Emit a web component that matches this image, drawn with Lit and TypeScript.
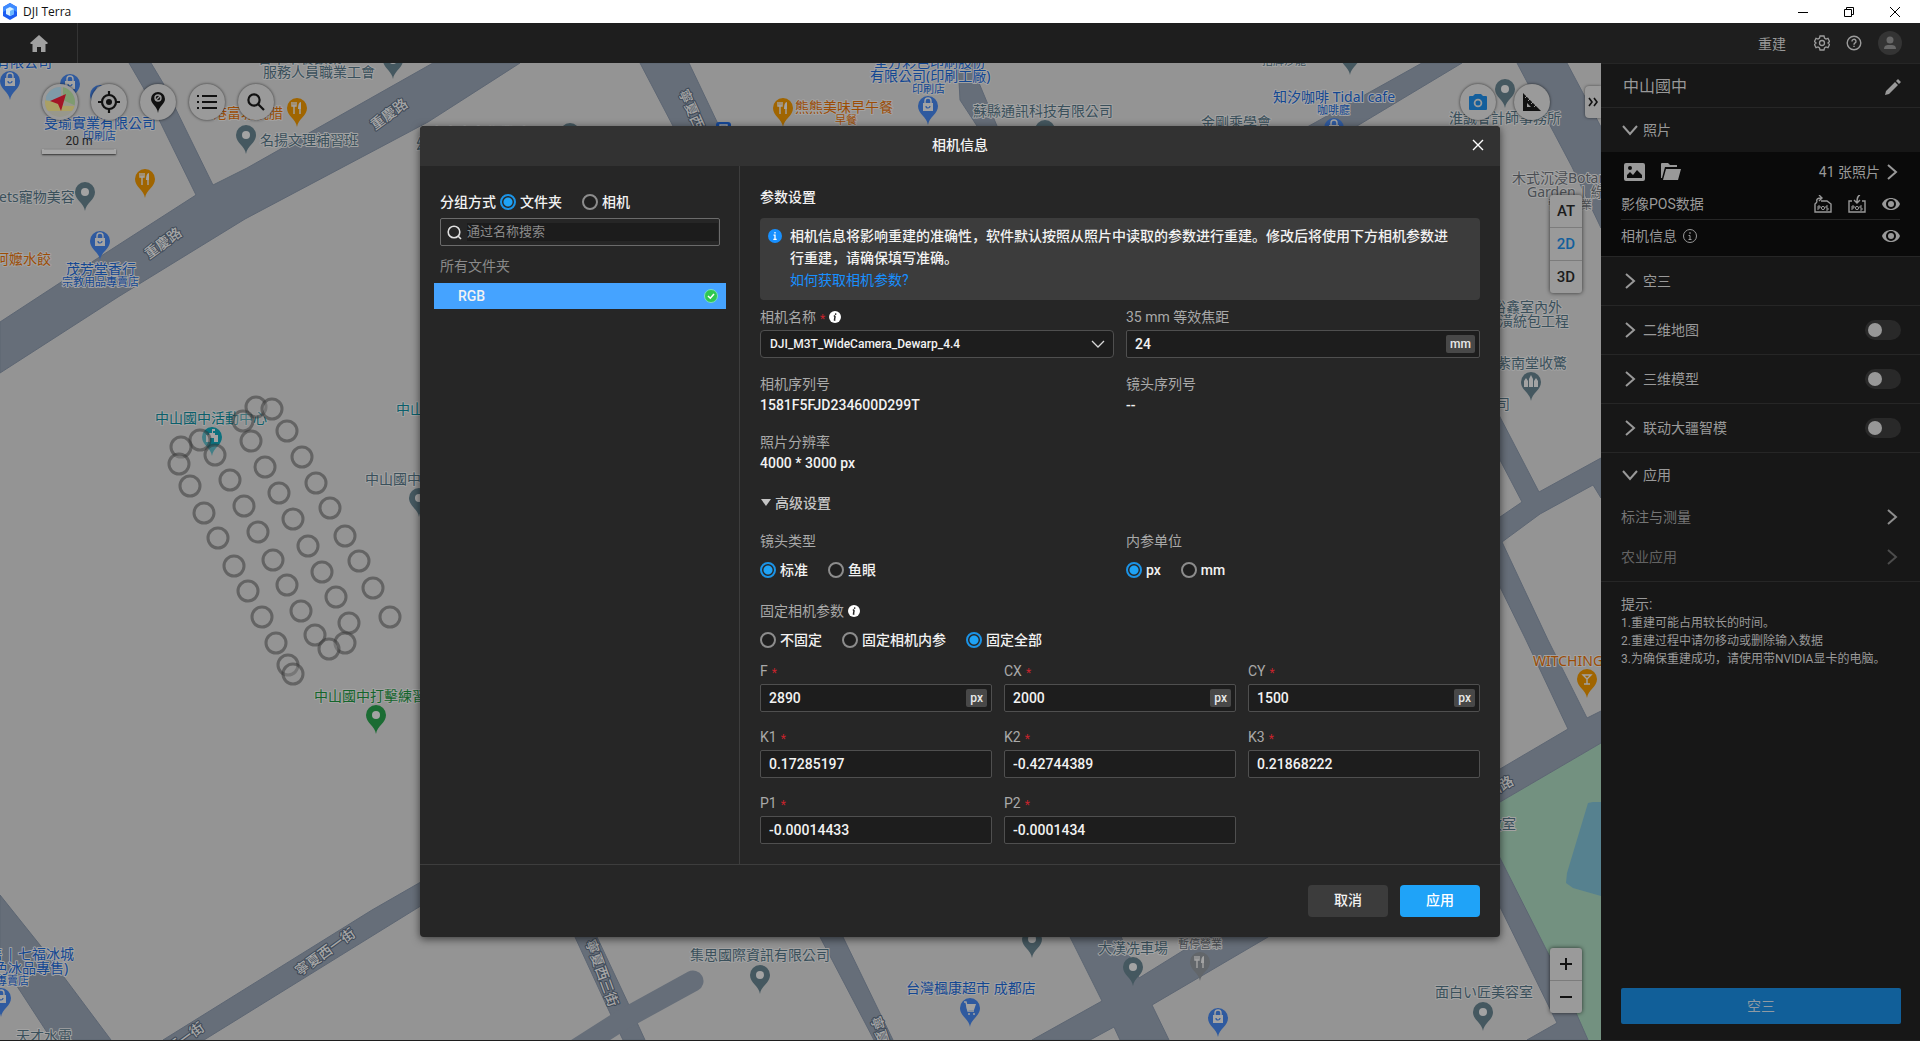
import { LitElement, html, svg, css, nothing } from "lit";
import { customElement, property, state } from "lit/decorators.js";
import { classMap } from "lit/directives/class-map.js";

const base = css`
  * {
    box-sizing: border-box;
  }
  button,
  input,
  select {
    font: inherit;
    color: inherit;
    margin: 0;
  }
  button {
    display: flex;
    align-items: center;
    justify-content: center;
    padding: 0;
    border: 0;
    background: none;
    cursor: pointer;
  }
  svg {
    display: block;
    flex: none;
  }
  h1,
  h2,
  p {
    margin: 0;
    font: inherit;
  }
`;

/* ---------- Map ---------- */

type Tone = "blue" | "slate" | "orange" | "green" | "teal" | "grey";
type Glyph = "dot" | "bag" | "food" | "cart" | "hall" | "drink" | "school";

interface Label {
  t: string;
  x: number;
  y: number;
  tone: Tone;
  small?: boolean;
}

const labels: Label[] = [
  { t: "有限公司", x: -4, y: 67, tone: "blue" },
  { t: "台中市餐飲業", x: 258, y: 63, tone: "slate" },
  { t: "服務人員職業工會", x: 263, y: 77, tone: "slate" },
  { t: "旻瑜實業有限公司", x: 44, y: 128, tone: "blue" },
  { t: "印刷店", x: 83, y: 140, tone: "blue", small: true },
  { t: "港富城燒腊", x: 213, y: 118, tone: "orange" },
  { t: "名揚文理補習班", x: 260, y: 145, tone: "slate" },
  { t: "ets寵物美容", x: -1, y: 202, tone: "slate" },
  { t: "阿嬤水餃", x: -5, y: 264, tone: "orange" },
  { t: "茂芳堂香行", x: 66, y: 274, tone: "blue" },
  { t: "宗教用品專賣店", x: 62, y: 286, tone: "blue", small: true },
  { t: "寶立文力作業點", x: 430, y: 138, tone: "slate" },
  { t: "幼", x: 416, y: 149, tone: "slate" },
  { t: "熊熊美味早午餐", x: 795, y: 112, tone: "orange" },
  { t: "早餐", x: 835, y: 124, tone: "orange", small: true },
  { t: "全方彩色印刷股份", x: 874, y: 67, tone: "blue" },
  { t: "有限公司(印刷工廠)", x: 870, y: 81, tone: "blue" },
  { t: "印刷店", x: 912, y: 93, tone: "blue", small: true },
  { t: "蘇縣通訊科技有限公司", x: 973, y: 116, tone: "slate" },
  { t: "金剛乘學會", x: 1201, y: 127, tone: "slate" },
  { t: "招牌沙龍", x: 1262, y: 65, tone: "slate", small: true },
  { t: "知汐咖啡 Tidal cafe", x: 1273, y: 102, tone: "blue" },
  { t: "咖啡廳", x: 1317, y: 114, tone: "blue", small: true },
  { t: "淮誠會計師事務所", x: 1449, y: 123, tone: "slate" },
  { t: "木式沉浸Botanic", x: 1512, y: 183, tone: "grey" },
  { t: "Garden | 綠沐", x: 1527, y: 197, tone: "grey" },
  { t: "暫停營業", x: 1548, y: 209, tone: "grey", small: true },
  { t: "裕鑫室內外", x: 1492, y: 312, tone: "slate" },
  { t: "潢統包工程", x: 1499, y: 326, tone: "slate" },
  { t: "紫南堂收驚", x: 1497, y: 368, tone: "slate" },
  { t: "司", x: 1496, y: 409, tone: "slate" },
  { t: "WITCHING", x: 1533, y: 666, tone: "orange" },
  { t: "教室", x: 1488, y: 829, tone: "slate" },
  { t: "中山國中活動中心", x: 155, y: 423, tone: "teal" },
  { t: "中山國中", x: 396, y: 414, tone: "teal" },
  { t: "中山國中", x: 365, y: 484, tone: "slate" },
  { t: "中山國中打擊練習場", x: 314, y: 701, tone: "green" },
  { t: "售 | 七福冰城", x: -11, y: 959, tone: "blue" },
  { t: "色冰品專售)", x: -6, y: 973, tone: "blue" },
  { t: "專賣店", x: -4, y: 985, tone: "blue", small: true },
  { t: "天才水電", x: 16, y: 1041, tone: "slate" },
  { t: "集思國際資訊有限公司", x: 690, y: 960, tone: "slate" },
  { t: "大漢冼車場", x: 1098, y: 953, tone: "slate" },
  { t: "暫停營業", x: 1178, y: 948, tone: "grey", small: true },
  { t: "台灣楓康超市 成都店", x: 906, y: 993, tone: "blue" },
  { t: "面白い匠美容室", x: 1435, y: 997, tone: "slate" },
];

const streets: [string, number, number, number][] = [
  ["重慶路", 389, 114, -36],
  ["重慶路", 163, 243, -36],
  ["寧夏西一街", 325, 952, -36],
  ["寧夏西一街", 174, 1046, -36],
  ["寧夏西三街", 602, 973, 70],
  ["寧夏西二街", 697, 122, 66],
  ["寧夏西二街", 886, 1050, 72],
  ["中山路", 1494, 790, -30],
];

const pins: [number, number, Tone, Glyph][] = [
  [10, 100, "blue", "bag"],
  [70, 103, "blue", "bag"],
  [100, 114, "blue", "bag"],
  [393, 79, "slate", "dot"],
  [297, 127, "orange", "food"],
  [246, 154, "slate", "dot"],
  [145, 198, "orange", "food"],
  [85, 211, "slate", "dot"],
  [100, 260, "blue", "bag"],
  [570, 152, "slate", "dot"],
  [783, 127, "orange", "food"],
  [928, 125, "blue", "bag"],
  [1045, 149, "slate", "dot"],
  [1350, 75, "slate", "dot"],
  [1334, 147, "blue", "bag"],
  [1505, 108, "slate", "dot"],
  [1531, 401, "slate", "hall"],
  [1587, 698, "orange", "drink"],
  [212, 456, "teal", "school"],
  [419, 517, "slate", "dot"],
  [376, 734, "green", "dot"],
  [1, 1017, "blue", "bag"],
  [760, 994, "slate", "dot"],
  [1032, 958, "slate", "dot"],
  [1133, 986, "slate", "dot"],
  [1200, 981, "grey", "food"],
  [970, 1027, "blue", "cart"],
  [1218, 1037, "blue", "bag"],
  [1483, 1031, "slate", "dot"],
];

const shots: [number, number][] = [
  [256, 407], [272, 409], [243, 421], [287, 431], [251, 441], [200, 440], [181, 447],
  [179, 464], [215, 455], [302, 457], [265, 467], [190, 486], [230, 480], [316, 483],
  [279, 493], [204, 513], [244, 506], [330, 508], [293, 519], [218, 538], [258, 532],
  [345, 536], [308, 546], [234, 566], [273, 560], [359, 561], [322, 572], [248, 591],
  [287, 585], [373, 588], [336, 597], [262, 617], [301, 611], [390, 617], [349, 623],
  [276, 643], [315, 635], [345, 643], [329, 649], [288, 665], [293, 674],
];

const roads = [
  "0,322 98,258 196,195 143,87 129,63 151,63 163,83 213,185 247,168 433,63 520,63 428,122 245,219 118,297 0,373",
  "640,63 689,63 719,126 726,140 680,140 673,126",
  "958,63 979,63 979,83 997,126 1003,140 983,140 977,126 960,100",
  "1422,63 1462,63 1357,126 1340,136 1290,136 1309,126",
  "1517,63 1567,63 1601,127 1601,228 1572,167",
  "1490,397 1500,417 1539,492 1601,458 1601,498 1593,485 1540,514 1502,542 1548,640 1587,718 1601,711 1601,743 1500,802 1490,808 1490,775 1500,769 1568,729 1526,640 1500,587 1490,566 1490,524 1500,517 1522,502 1500,460",
  "1490,838 1500,858 1550,957 1577,1015 1588,1040 1527,1040 1557,1023 1500,907 1490,887",
  "0,895 40,945 111,1040 52,1040 0,960",
  "440,871 372,910 163,1040 204,1040 440,894",
  "570,925 593,925 597,937 628,1003 645,1040 623,1040 610,1013 575,937",
  "816,925 839,925 843,937 893,1040 874,1040 820,937",
  "1066,925 1116,925 1139,978 1205,937 1225,925 1285,925 1268,937 1152,1005 1169,1040 1120,1040 1114,1027 1090,1040 1032,1040 1102,1001 1070,937",
];

const glyph = (g: Glyph) => {
  switch (g) {
    case "dot":
      return svg`<circle cy="-19" r="4" class="ink"/>`;
    case "bag":
      return svg`<path class="ink" d="M-5 -22H5V-14H-5Z"/><path class="inkline" d="M-3 -22V-24A3 3 0 0 1 3 -24V-22"/><path class="smile" d="M-2 -19A2 2 0 0 0 2 -19"/>`;
    case "food":
      return svg`<path class="inkline" d="M-3 -25V-13M-5 -25V-21H-1V-25M3 -19V-13"/><path class="ink" d="M4 -25V-18H1C1 -22 2 -25 4 -25Z"/>`;
    case "cart":
      return svg`<path class="ink" d="M-4 -23H6L4 -17H-3Z"/><path class="inkline" d="M-6 -25H-4L-2 -16H4"/><circle class="ink" cx="-1" cy="-13" r="1"/><circle class="ink" cx="4" cy="-13" r="1"/>`;
    case "hall":
      return svg`<path class="ink" d="M-7 -14V-20L-5 -23L-3 -20V-14ZM-2 -14V-22L0 -26L2 -22V-14ZM3 -14V-20L5 -23L7 -20V-14Z"/>`;
    case "drink":
      return svg`<path class="inkline" d="M-4 -23H4L0 -19ZM0 -19V-14M-3 -14H3"/>`;
    case "school":
      return svg`<path class="ink" d="M-6 -14V-21H-3V-23H0V-27H3V-25H1V-23H3V-21H6V-14H2V-18H-2V-14Z"/>`;
  }
};

@customElement("terra-map")
class TerraMap extends LitElement {
  @state() private mode = "2D";

  static styles = [
    base,
    css`
      :host {
        display: grid;
        position: relative;
        overflow: hidden;
        background: #949494;
        min-width: 0;
      }
      .canvas {
        position: absolute;
        inset: 0;
        width: 100%;
        height: 100%;
        font-family: "Noto Sans", "Noto Sans CJK TC", sans-serif;
      }
      .road { fill: #666e79; stroke: #5d6673; stroke-width: 1; }
      .stub { fill: none; stroke: #666e79; stroke-width: 21; stroke-linecap: round; }
      .park { fill: #739180; }
      .pool { fill: #56818f; }
      text {
        font-size: 14px;
        paint-order: stroke;
        stroke: #a2a2a2;
        stroke-width: 2;
        stroke-linejoin: round;
      }
      text.small { font-size: 11px; }
      text.street {
        fill: #a6a6a6;
        stroke: #3f4a58;
        text-anchor: middle;
        font-weight: 500;
      }
      text.blue { fill: #134792; }
      text.slate { fill: #3a505b; }
      text.orange { fill: #9c4d06; }
      text.green { fill: #14652c; }
      text.teal { fill: #0b5f6b; }
      text.grey { fill: #4b4f54; }
      .pin.blue { fill: #2f5a9f; }
      .pin.slate { fill: #455860; }
      .pin.orange { fill: #a06500; }
      .pin.green { fill: #1b6c33; }
      .pin.teal { fill: #0c717e; }
      .pin.grey { fill: #62666a; }
      .ink { fill: #a3a3a3; }
      .inkline { fill: none; stroke: #a3a3a3; stroke-width: 1.4; }
      .smile { fill: none; stroke: #2f5a9f; stroke-width: 1.2; }
      .shot { fill: #949494; fill-opacity: 0.4; stroke: #333333; stroke-opacity: 0.5; stroke-width: 3; }
      .transit { fill: #14489a; }
      .controls {
        position: relative;
        display: grid;
        grid-template-columns: 1fr auto;
        grid-template-rows: auto auto 1fr;
        padding: 21px 0 27px 42px;
        align-items: start;
      }
      .tools { display: flex; gap: 13px; }
      .tools.right { gap: 18px; align-items: center; }
      .round {
        width: 36px;
        height: 36px;
        border-radius: 50%;
        background: #9a9a9a;
        box-shadow: 0 0 3px #000000aa;
        color: #111;
      }
      .fold {
        width: 16px;
        height: 32px;
        margin-left: 17px;
        border-radius: 4px 0 0 4px;
        background: #9a9a9a;
        box-shadow: 0 0 3px #00000088;
      }
      .scale {
        display: grid;
        width: 74px;
        margin-top: 13px;
        font: 12px/16px Roboto, sans-serif;
        color: #222;
        text-align: center;
      }
      .bar {
        height: 5px;
        border: solid #a6a6a6;
        border-width: 0 2px 4px;
        box-shadow: 0 1px 2px #000000aa;
      }
      .stack {
        grid-column: 2;
        justify-self: end;
        display: grid;
        width: 32px;
        margin-right: 19px;
        border-radius: 3px;
        background: #9a9a9a;
        box-shadow: 0 0 4px #000000aa;
        font: 500 15px/32px Roboto, sans-serif;
        color: #1c1c1c;
      }
      .stack button { height: 32px; }
      .stack button + button { border-top: 1px solid #7c7c7c; height: 33px; }
      .stack .on { color: #145f9c; }
      .modes { margin-top: 75px; grid-row: 2 / 4; }
      .zoom { grid-row: 3; align-self: end; }
    `,
  ];

  render() {
    return html`
      <svg class="canvas" viewBox="0 63 1601 977" preserveAspectRatio="xMinYMin slice" role="img" aria-label="地图">
        <polygon class="park" points="1490,808 1500,802 1601,743 1601,1040 1588,1040 1550,957 1500,858 1490,838" />
        <polygon class="pool" points="1588,803 1593,802 1601,802 1601,896 1573,888 1566,883 1567,873" />
        ${roads.map((p) => svg`<polygon class="road" points=${p}/>`)}
        <path class="stub" d="M693 981L622 1020L575 1050" />
        ${streets.map(
          ([t, x, y, r]) =>
            svg`<text class="street" transform="translate(${x} ${y}) rotate(${r})" y="5">${t}</text>`
        )}
        <rect class="transit" x="716" y="122" width="15" height="15" rx="3" />
        <path class="inkline" d="M720 130V125H727V130" />
        ${labels.map(
          (l) =>
            svg`<text class=${l.tone + (l.small ? " small" : "")} x=${l.x} y=${l.y}>${l.t}</text>`
        )}
        ${pins.map(
          ([x, y, tone, g]) => svg`<g class="pin ${tone}" transform="translate(${x} ${y})">
            <path d="M0 0C-1 -8 -10 -11 -10 -19A10 10 0 0 1 10 -19C10 -11 1 -8 0 0Z"/>${glyph(g)}</g>`
        )}
        ${shots.map(([x, y]) => svg`<circle class="shot" cx=${x} cy=${y} r="10"/>`)}
      </svg>
      <div class="controls">
        <div class="tools">
          <button class="round" aria-label="地图类型">
            <svg width="32" height="32" viewBox="0 0 32 32">
              <defs><clipPath id="disc"><circle cx="16" cy="16" r="15" /></clipPath></defs>
              <g clip-path="url(#disc)">
                <path fill="#98988c" d="M0 0H32V32H0Z" /><path fill="#7f9aa8" d="M2 0H17V10L2 18Z" />
                <path fill="#7f9b70" d="M19 0H32V20L19 14Z" /><path fill="#aaa065" d="M0 14L14 16L20 20H32V25H0Z" />
              </g>
              <path fill="#a31526" d="M22 8L17 25L14 18L6 15Z" />
            </svg>
          </button>
          <button class="round" aria-label="定位">
            <svg width="24" height="24" viewBox="0 0 24 24" fill="none" stroke="currentColor" stroke-width="2.2">
              <circle cx="12" cy="12" r="7" /><circle cx="12" cy="12" r="3" fill="currentColor" stroke="none" />
              <path d="M12 1V6M12 18V23M1 12H6M18 12H23" />
            </svg>
          </button>
          <button class="round" aria-label="标记">
            <svg width="20" height="22" viewBox="0 0 20 22">
              <path fill="currentColor" d="M10 22C9 15 3 13 3 8A7 7 0 0 1 17 8C17 13 11 15 10 22Z" />
              <circle cx="10" cy="7" r="3" fill="none" stroke="#9a9a9a" stroke-width="1.4" /><path d="M8 9L12 5" stroke="#9a9a9a" stroke-width="1.2" />
            </svg>
          </button>
          <button class="round" aria-label="列表">
            <svg width="20" height="16" viewBox="0 0 20 16" stroke="currentColor" stroke-width="2">
              <path d="M0 2H2M5 2H20M0 8H2M5 8H20M0 14H2M5 14H20" />
            </svg>
          </button>
          <button class="round" aria-label="搜索">
            <svg width="18" height="18" viewBox="0 0 18 18" fill="none" stroke="currentColor" stroke-width="2.2">
              <circle cx="7" cy="7" r="5.6" /><path d="M11 11L17 17" />
            </svg>
          </button>
        </div>
        <div class="tools right">
          <button class="round" aria-label="相机">
            <svg width="20" height="18" viewBox="0 0 20 18">
              <path fill="#145f9c" d="M2 3H5L7 1H13L15 3H18A1 1 0 0 1 19 4V16A1 1 0 0 1 18 17H2A1 1 0 0 1 1 16V4A1 1 0 0 1 2 3Z" />
              <circle cx="10" cy="10" r="3.4" fill="none" stroke="#9a9a9a" stroke-width="1.8" />
            </svg>
          </button>
          <button class="round" aria-label="测量">
            <svg width="20" height="20" viewBox="0 0 20 20">
              <path fill="currentColor" fill-rule="evenodd" d="M1 1L19 19H1ZM5 11V15H9Z" />
              <path d="M5 4L3 6M8 7L6 9M11 10L9 12M14 13L12 15" stroke="#9a9a9a" stroke-width="1" />
            </svg>
          </button>
          <button class="fold" aria-label="收起">
            <svg width="10" height="10" viewBox="0 0 10 10" fill="none" stroke="#111" stroke-width="1.6"><path d="M1 1L4 5L1 9M6 1L9 5L6 9" /></svg>
          </button>
        </div>
        <div class="scale"><span>20 m</span><span class="bar"></span></div>
        <div class="stack modes">
          ${["AT", "2D", "3D"].map(
            (m) => html`<button class=${classMap({ on: m === this.mode })} @click=${() => (this.mode = m)}>${m}</button>`
          )}
        </div>
        <div class="stack zoom">
          <button aria-label="放大"><svg width="14" height="14" viewBox="0 0 14 14" stroke="#111" stroke-width="2"><path d="M7 1V13M1 7H13" /></svg></button>
          <button aria-label="缩小"><svg width="14" height="14" viewBox="0 0 14 14" stroke="#111" stroke-width="2"><path d="M1 7H13" /></svg></button>
        </div>
      </div>
    `;
  }
}

/* ---------- Side panel ---------- */

const down = html`<svg width="16" height="16" viewBox="0 0 16 16" fill="none" stroke="currentColor" stroke-width="2"><path d="M1 4L8 12L15 4" /></svg>`;
const right = html`<svg width="16" height="16" viewBox="0 0 16 16" fill="none" stroke="currentColor" stroke-width="2"><path d="M4 1L12 8L4 15" /></svg>`;
const eye = html`<svg width="18" height="14" viewBox="0 0 18 14"><path fill="currentColor" fill-rule="evenodd" d="M0 7C3 -1 15 -1 18 7C15 15 3 15 0 7ZM9 2A5 5 0 1 0 9 12A5 5 0 1 0 9 2Z" /><circle cx="9" cy="7" r="3" fill="currentColor" /></svg>`;

@customElement("project-panel")
class ProjectPanel extends LitElement {
  static styles = [
    base,
    css`
      :host {
        display: flex;
        flex-direction: column;
        width: 319px;
        background: #171717;
        border-top: 1px solid #262626;
        color: #999;
        font-size: 14px;
        line-height: 20px;
      }
      header,
      .head,
      .line,
      .link {
        display: flex;
        align-items: center;
        padding: 0 20px;
      }
      header { height: 44px; padding: 2px 19px 0 22px; border-bottom: 1px solid #262626; justify-content: space-between; font-size: 16px; }
      .head { height: 49px; border-bottom: 1px solid #262626; gap: 5px; width: 100%; padding: 0 19px 1px 21px; }
      .head .name { flex: 1; text-align: left; }
      .head.open { height: 44px; border: 0; }
      .photos { background: #0a0a0a; border-bottom: 1px solid #262626; height: 105px; padding-top: 3px; }
      .line { gap: 16px; height: 32px; }
      .line.files { height: 33px; padding-left: 23px; }
      .line.pos { margin: 0 20px; padding: 0; border-bottom: 1px solid #262626; }
      .grow { flex: 1; display: flex; align-items: center; gap: 6px; }
      .count { gap: 4px; }
      .switch {
        appearance: none;
        width: 36px;
        height: 20px;
        border-radius: 10px;
        background: #292929;
        padding: 3px;
        display: flex;
      }
      .switch::before { content: ""; width: 14px; height: 14px; border-radius: 50%; background: #979797; }
      .switch:checked { justify-content: flex-end; background: #125f9a; }
      .apps { padding-bottom: 4px; border-bottom: 1px solid #262626; }
      .link { width: 100%; height: 40px; justify-content: space-between; color: #757575; }
      .link svg { color: #8e8e8e; }
      .link.off { color: #636363; }
      .link.off svg { color: #4c4c4c; }
      .tips { padding: 12px 20px; font-size: 14px; line-height: 20px; }
      .tips p + p { font-size: 12px; line-height: 18px; }
      .run {
        margin: auto 19px 16px 20px;
        height: 36px;
        border-radius: 2px;
        background: #115f99;
        color: #8f9aa3;
      }
    `,
  ];

  private fold(name: string, toggle = false) {
    return html`<div class="head">
      ${right}
      ${toggle
        ? html`<label class="name" for=${name}>${name}</label><input class="switch" id=${name} type="checkbox" role="switch" />`
        : html`<span class="name">${name}</span>`}
    </div>`;
  }

  render() {
    return html`
      <header>
        <h1>中山國中</h1>
        <button aria-label="编辑">
          <svg width="16" height="16" viewBox="0 0 16 16" fill="currentColor"><path d="M1 12L10 3L13 6L4 15L0 16ZM11 2L13 0L16 3L14 5Z" /></svg>
        </button>
      </header>
      <button class="head open">${down}<span class="name">照片</span></button>
      <div class="photos">
        <div class="line files">
          <button aria-label="添加照片">
            <svg width="21" height="18" viewBox="0 0 21 18"><path fill="currentColor" fill-rule="evenodd" d="M2 0H19A2 2 0 0 1 21 2V16A2 2 0 0 1 19 18H2A2 2 0 0 1 0 16V2A2 2 0 0 1 2 0ZM3 15H18V12L13 7L9 12L6 9L3 12ZM6 3A2 2 0 1 0 6 7A2 2 0 1 0 6 3Z" /></svg>
          </button>
          <button aria-label="添加文件夹">
            <svg width="20" height="17" viewBox="0 0 20 17" fill="currentColor"><path d="M0 15V1A1 1 0 0 1 1 0H7L9 2H16V4H4L1 15ZM5 6H20L17 17H2Z" /></svg>
          </button>
          <span class="grow"></span>
          <button class="count">41 张照片 ${right}</button>
        </div>
        <div class="line pos">
          <span class="grow">影像POS数据</span>
          <button aria-label="导出POS">
            <svg width="18" height="18" viewBox="0 0 18 18" fill="none" stroke="currentColor" stroke-width="1.4"><path d="M7 6H13L17 9V17H1V9L3 7M3 7C2 4 4 3 7 3M5 0L8 3L5 6" /><g stroke-width="1"><path d="M4 15V11H6V13H4" /><circle cx="9" cy="13" r="1.6" /><path d="M14 11H12V13H14V15H12" /></g></svg>
          </button>
          <button aria-label="导入POS">
            <svg width="18" height="18" viewBox="0 0 18 18" fill="none" stroke="currentColor" stroke-width="1.4"><path d="M4 6H1V17H17V6H14M12 0C9 1 9 4 9 8M6 5L9 8L12 5" /><g stroke-width="1"><path d="M4 15V11H6V13H4" /><circle cx="9" cy="13" r="1.6" /><path d="M14 11H12V13H14V15H12" /></g></svg>
          </button>
          <button aria-label="显示POS">${eye}</button>
        </div>
        <div class="line">
          <span class="grow">相机信息
            <svg width="14" height="14" viewBox="0 0 14 14" fill="none" stroke="currentColor"><circle cx="7" cy="7" r="6.5" /><path d="M7 3V5M5.5 6.5H7V10.5M5.5 10.5H8.5" /></svg>
          </span>
          <button aria-label="显示相机信息">${eye}</button>
        </div>
      </div>
      ${this.fold("空三")} ${this.fold("二维地图", true)} ${this.fold("三维模型", true)}
      ${this.fold("联动大疆智模", true)}
      <div class="apps">
        <button class="head open">${down}<span class="name">应用</span></button>
        <button class="link">标注与测量 ${right}</button>
        <button class="link off">农业应用 ${right}</button>
      </div>
      <div class="tips">
        <p>提示:</p>
        <p>1.重建可能占用较长的时间。</p>
        <p>2.重建过程中请勿移动或删除输入数据</p>
        <p>3.为确保重建成功，请使用带NVIDIA显卡的电脑。</p>
      </div>
      <button class="run">空三</button>
    `;
  }
}

/* ---------- Camera dialog ---------- */

interface Param {
  name: string;
  value: string;
  unit?: string;
}

const params: Param[] = [
  { name: "F", value: "2890", unit: "px" },
  { name: "CX", value: "2000", unit: "px" },
  { name: "CY", value: "1500", unit: "px" },
  { name: "K1", value: "0.17285197" },
  { name: "K2", value: "-0.42744389" },
  { name: "K3", value: "0.21868222" },
  { name: "P1", value: "-0.00014433" },
  { name: "P2", value: "-0.0001434" },
];

const infoDot = html`<svg width="12" height="12" viewBox="0 0 12 12"><circle cx="6" cy="6" r="6" fill="#fff" /><path d="M6.8 2.4L6.5 3.8M6.2 5L5.4 9M4.8 5H6.2M4.8 9H6.4" stroke="#222" stroke-width="1.4" /></svg>`;

@customElement("camera-dialog")
class CameraDialog extends LitElement {
  @property({ type: String }) heading = "相机信息";

  static styles = [
    base,
    css`
      :host {
        display: flex;
        flex-direction: column;
        width: min(1080px, 94vw);
        background: #262626;
        border-radius: 4px;
        box-shadow: 0 2px 8px #00000099;
        color: #f2f2f2;
        font-size: 14px;
        font-weight: 500;
        line-height: 22px;
        overflow: hidden;
      }
      header {
        display: grid;
        grid-template-columns: 1fr auto 1fr;
        align-items: center;
        height: 40px;
        padding: 0 16px 2px 0;
        background: #323232;
      }
      header h2 { grid-column: 2; padding-left: 16px; }
      header button { justify-self: end; }
      .body { display: grid; grid-template-columns: 320px 1fr; }
      .groups { border-right: 1px solid #3d3d3d; padding: 26px 13px 0 14px; }
      .groups .choices { padding: 0 6px; gap: 4px; }
      .choices { display: flex; align-items: center; gap: 20px; line-height: 20px; height: 20px; }
      .choices label { display: flex; align-items: center; gap: 4px; }
      .groups label + label { margin-left: 16px; }
      input[type="radio"] {
        appearance: none;
        width: 16px;
        height: 16px;
        border: 2px solid #8c8c8c;
        border-radius: 50%;
        background: #1f1f1f;
      }
      input[type="radio"]:checked {
        border-color: #1b93e6;
        background: radial-gradient(circle, #1fa3f6 4px, #262626 5px);
      }
      .search {
        display: flex;
        align-items: center;
        gap: 5px;
        height: 28px;
        margin: 6px 6px 0;
        padding: 0 1px 0 6px;
        border: 1px solid #6b6b6b;
        border-radius: 2px;
      }
      .search input {
        flex: 1;
        min-width: 0;
        height: 18px;
        padding: 0;
        border: 0;
        outline: 0;
        background: #1c1c1c;
        font-size: 13px;
        font-weight: 400;
      }
      .search input::placeholder { color: #8a8a8a; }
      .caption { margin: 9px 6px 6px; color: #8a8a8a; font-weight: 400; }
      .folder {
        display: flex;
        justify-content: space-between;
        width: 100%;
        height: 26px;
        padding: 0 8px 1px 24px;
        background: #45a3ff;
        font-weight: 500;
      }
      .form { padding: 20px; min-width: 0; }
      .notice {
        display: flex;
        gap: 8px;
        margin-top: 10px;
        padding: 7px 24px 9px 8px;
        border-radius: 4px;
        background: #3c3c3c;
      }
      .notice svg { margin-top: 4px; }
      .notice a { color: #1890ff; font-weight: 400; text-decoration: none; }
      .pair { display: grid; grid-template-columns: 1fr 1fr; column-gap: 12px; margin-top: 6px; }
      .trio { display: grid; grid-template-columns: 1fr 1fr 1fr; gap: 14px 12px; margin-top: 10px; }
      .facts { margin-top: 16px; line-height: 21px; }
      .advanced { justify-content: flex-start; gap: 4px; margin-top: 18px; padding-left: 1px; font-weight: 500; color: #c4c4c4; height: 22px; }
      .types { margin-top: 16px; }
      .fixed { margin-top: 20px; }
      .pair .choices, .fixed .choices { margin-top: 8px; }
      .label { display: flex; align-items: center; gap: 4px; color: #a9a9a9; font-weight: 400; }
      .star { padding-top: 4px; color: #c8232c; font-size: 12px; line-height: 18px; }
      .field { display: grid; gap: 2px; min-width: 0; }
      .box {
        display: flex;
        align-items: center;
        height: 28px;
        padding: 0 4px 0 0;
        border: 1px solid #4f4f4f;
        border-radius: 2px;
        background: #1d1d1d;
      }
      .box input, .box select {
        flex: 1;
        min-width: 0;
        align-self: stretch;
        padding: 0 8px;
        border: 0;
        outline: 0;
        background: none;
        appearance: none;
      }
      .box select { font-size: 12px; margin-right: -24px; padding-left: 9px; }
      .box.pick { border-radius: 4px; padding-right: 8px; }
      .box.pick svg { pointer-events: none; }
      .unit { padding: 0 4px; border-radius: 2px; background: #484848; font-size: 12px; line-height: 18px; color: #e8e8e8; }
      footer { display: flex; justify-content: flex-end; gap: 12px; padding: 20px; border-top: 1px solid #3d3d3d; }
      footer button { width: 80px; height: 32px; padding-bottom: 2px; border-radius: 4px; background: #3c3c3c; font-weight: 500; }
      footer .primary { background: #1fa3f8; color: #fff; }
    `,
  ];

  private radios(group: string, names: string[], on: string) {
    return names.map(
      (n) => html`<label><input type="radio" name=${group} .checked=${n === on} />${n}</label>`
    );
  }

  private field(p: Param, required = true) {
    return html`<div class="field">
      <label class="label" for=${p.name}>${p.name}${required ? html`<span class="star">*</span>` : nothing}</label>
      <div class="box">
        <input id=${p.name} type="text" .value=${p.value} />
        ${p.unit ? html`<span class="unit">${p.unit}</span>` : nothing}
      </div>
    </div>`;
  }

  render() {
    return html`
      <header>
        <h2>${this.heading}</h2>
        <button aria-label="关闭">
          <svg width="12" height="12" viewBox="0 0 12 12" stroke="#fff" stroke-width="1.4"><path d="M1 1L11 11M11 1L1 11" /></svg>
        </button>
      </header>
      <div class="body">
        <div class="groups">
          <div class="choices"><span>分组方式</span>${this.radios("group", ["文件夹", "相机"], "文件夹")}</div>
          <div class="search">
            <svg width="15" height="15" viewBox="0 0 15 15" fill="none" stroke="#e0e0e0" stroke-width="1.6"><circle cx="7" cy="7" r="5.8" /><path d="M11 11L14 14" /></svg>
            <input type="text" placeholder="通过名称搜索" aria-label="通过名称搜索" />
          </div>
          <p class="caption">所有文件夹</p>
          <button class="folder">RGB
            <svg width="14" height="14" viewBox="0 0 14 14"><circle cx="7" cy="7" r="6.5" fill="#2fc84f" stroke="#7be0c0" /><path d="M4 7L6.3 9.2L10 5" fill="none" stroke="#fff" stroke-width="1.5" /></svg>
          </button>
        </div>
        <div class="form">
          <h2>参数设置</h2>
          <div class="notice">
            <svg width="14" height="14" viewBox="0 0 14 14"><circle cx="7" cy="7" r="7" fill="#1890ff" /><path d="M7 3V4.5M5.5 6.2H7V10.2M5.3 10.3H8.7" fill="none" stroke="#fff" stroke-width="1.3" /></svg>
            <div>
              <p>相机信息将影响重建的准确性，软件默认按照从照片中读取的参数进行重建。修改后将使用下方相机参数进行重建，请确保填写准确。</p>
              <a href="#help">如何获取相机参数?</a>
            </div>
          </div>
          <div class="pair">
            <div class="field">
              <label class="label" for="camera">相机名称<span class="star">*</span>${infoDot}</label>
              <div class="box pick">
                <select id="camera"><option>DJI_M3T_WideCamera_Dewarp_4.4</option></select>
                <svg width="14" height="14" viewBox="0 0 14 14" fill="none" stroke="#d8d8d8" stroke-width="1.3"><path d="M1 4L7 10L13 4" /></svg>
              </div>
            </div>
            ${this.field({ name: "35 mm 等效焦距", value: "24", unit: "mm" }, false)}
          </div>
          <div class="pair facts">
            <div><p class="label">相机序列号</p><p>1581F5FJD234600D299T</p></div>
            <div><p class="label">镜头序列号</p><p>--</p></div>
          </div>
          <div class="facts"><p class="label">照片分辨率</p><p>4000 * 3000 px</p></div>
          <button class="advanced">
            <svg width="10" height="8" viewBox="0 0 10 8"><path d="M0 0H10L5 7Z" fill="#c4c4c4" /></svg>高级设置
          </button>
          <div class="pair types">
            <div><p class="label">镜头类型</p><div class="choices">${this.radios("lens", ["标准", "鱼眼"], "标准")}</div></div>
            <div><p class="label">内参单位</p><div class="choices">${this.radios("unit", ["px", "mm"], "px")}</div></div>
          </div>
          <div class="fixed">
            <p class="label">固定相机参数${infoDot}</p>
            <div class="choices">${this.radios("fix", ["不固定", "固定相机内参", "固定全部"], "固定全部")}</div>
          </div>
          <div class="trio">${params.map((p) => this.field(p))}</div>
        </div>
      </div>
      <footer><button>取消</button><button class="primary">应用</button></footer>
    `;
  }
}

/* ---------- Window ---------- */

@customElement("app-root")
class AppRoot extends LitElement {
  static styles = [
    base,
    css`
      :host {
        display: flex;
        flex-direction: column;
        height: 100vh;
        background: #1e1e1e;
        font-family: Roboto, "Noto Sans CJK SC", sans-serif;
        font-size: 14px;
      }
      .title {
        display: flex;
        align-items: center;
        gap: 5px;
        height: 23px;
        padding-left: 2px;
        background: #fff;
        color: #111;
        font: 12px/20px "Open Sans", "Noto Sans", sans-serif;
      }
      .title .name { flex: 1; }
      .title .controls { display: flex; padding-right: 2px; }
      .title .controls button { width: 46px; height: 20px; }
      .work { position: relative; flex: 1; min-height: 0; display: flex; flex-direction: column; }
      .bar { display: flex; align-items: center; height: 40px; padding-right: 18px; color: #9c9c9c; }
      .home { width: 78px; height: 40px; border-right: 1px solid #343434; color: #a0a0a0; }
      .bar .mode { margin-left: auto; margin-right: 28px; color: #989898; }
      .bar .tool { margin-right: 16px; }
      .bar .user { width: 24px; height: 24px; border-radius: 50%; background: #343434; color: #686868; align-items: center; }
      .main { flex: 1; min-height: 0; display: flex; padding-bottom: 1px; }
      terra-map { flex: 1; }
      .overlay { position: absolute; inset: 0 0 1px; display: flex; align-items: center; justify-content: center; }
    `,
  ];

  render() {
    return html`
      <div class="title">
        <svg width="16" height="17" viewBox="0 0 16 17"><path d="M8 0L15 4V13L8 17L1 13V4Z" fill="#1c5df2" /><path d="M8 0L15 4V9L8 5L1 9V4Z" fill="#3f8bff" /><path d="M8 4L12 6V11L8 13L4 11V6Z" fill="#d9f1ff" /><path d="M8 8L12 6V11L8 13Z" fill="#6db8ff" /></svg>
        <span class="name">DJI Terra</span>
        <div class="controls">
          <button aria-label="最小化"><svg width="10" height="10" viewBox="0 0 10 10"><path d="M0 5H10V6H0Z" /></svg></button>
          <button aria-label="还原"><svg width="10" height="10" viewBox="0 0 10 10" fill="none" stroke="#000"><path d="M.5 2.5H7.5V9.5H.5ZM2.5 2.5V.5H9.5V7.5H7.5" /></svg></button>
          <button aria-label="关闭窗口"><svg width="10" height="10" viewBox="0 0 10 10" stroke="#000"><path d="M0 0L10 10M10 0L0 10" /></svg></button>
        </div>
      </div>
      <div class="work">
        <nav class="bar">
          <button class="home" aria-label="主页">
            <svg width="18" height="17" viewBox="0 0 18 17" fill="currentColor"><path d="M9 0L18 8L17 9H15.500V17H11V12H7V17H2.500V9H1L0 8Z" /></svg>
          </button>
          <button class="mode">重建</button>
          <button class="tool" aria-label="设置">
            <svg width="16" height="16" viewBox="0 0 16 16" fill="none" stroke="currentColor" stroke-width="1.3"><path d="M6 1H10L10.500 3L12 4L14 3.300L15.500 6.500L14 8L15.500 9.500L14 12.700L12 12L10.500 13L10 15H6L5.500 13L4 12L2 12.700L.5 9.500L2 8L.5 6.500L2 3.300L4 4L5.500 3Z" /><circle cx="8" cy="8" r="2.500" /></svg>
          </button>
          <button class="tool" aria-label="帮助">
            <svg width="16" height="16" viewBox="0 0 16 16" fill="none" stroke="currentColor" stroke-width="1.4"><circle cx="8" cy="8" r="6.800" /><path d="M6 6.500A2 2 0 1 1 9 8C8 8.500 8 9 8 9.700M8 10.800V12" /></svg>
          </button>
          <button class="user" aria-label="账户">
            <svg width="14" height="14" viewBox="0 0 14 14" fill="currentColor"><circle cx="7" cy="4" r="3.500" /><path d="M1 13C1 9 4 9 7 9S13 9 13 13Z" /></svg>
          </button>
        </nav>
        <div class="main">
          <terra-map></terra-map>
          <project-panel></project-panel>
        </div>
        <div class="overlay"><camera-dialog role="dialog" aria-label="相机信息"></camera-dialog></div>
      </div>
    `;
  }
}
